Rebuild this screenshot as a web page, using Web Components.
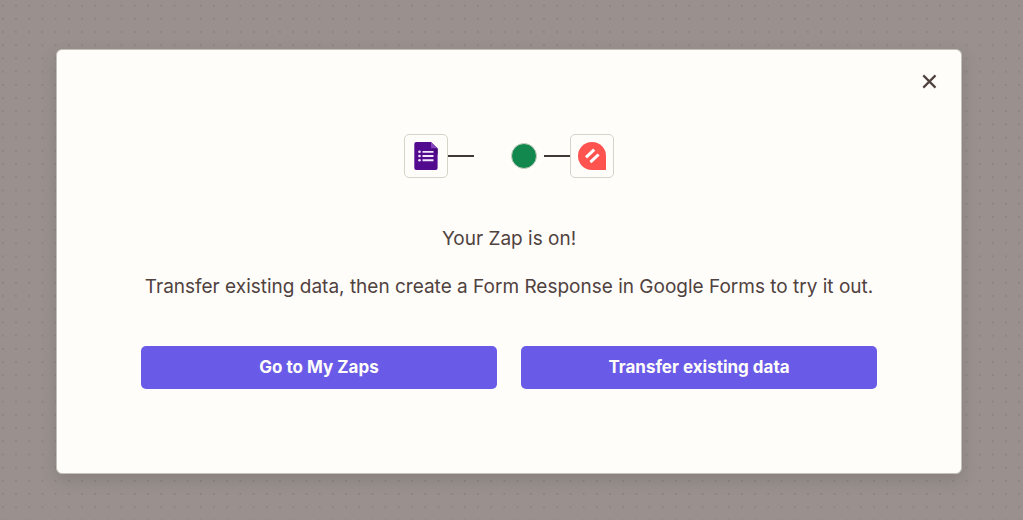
<!DOCTYPE html>
<html lang="en">
<head>
<meta charset="utf-8">
<meta name="viewport" content="width=device-width, initial-scale=1">
<title>Your Zap is on!</title>
<style>
  body {
    margin: 0;
    font-family: Inter, "Liberation Sans", sans-serif;
    color: #50423f;
  }
</style>
</head>
<body>

<zap-backdrop>
  <zap-modal>
    <zap-flow slot="media">
      <app-tile slot="from">
        <svg width="24" height="28" viewBox="0 0 24 28" role="img" aria-label="Google Forms">
          <path d="M2.3 0H17l6.6 6.6V26a2 2 0 0 1-2 2H2.3a2 2 0 0 1-2-2V2a2 2 0 0 1 2-2z" fill="#520a8f"/>
          <path d="M17 0l6.6 6.6h-5a1.6 1.6 0 0 1-1.6-1.6z" fill="#8546bd"/>
          <path d="M17.5 6.6h6.1v6.1z" fill="#42077a"/>
          <g fill="#f3e8fa">
            <circle cx="5.5" cy="9.8" r="1.3"/>
            <circle cx="5.5" cy="14" r="1.3"/>
            <circle cx="5.5" cy="18.2" r="1.3"/>
            <path d="M8.5 8.9h11v1.9h-11zM8.5 13.1h11V15h-11zM8.5 17.3h11v1.9h-11z"/>
          </g>
        </svg>
      </app-tile>
      <app-tile slot="to">
        <svg width="28" height="28" viewBox="0 0 28 28" role="img" aria-label="Connected app">
          <path d="M14 0a14 14 0 0 1 14 14v14H14a14 14 0 0 1 0-28z" fill="#ff5350"/>
          <path d="M8 15.3l8.2-7.6M12.4 20.1l8.2-7.6" fill="none" stroke="#fff" stroke-width="3"/>
        </svg>
      </app-tile>
    </zap-flow>
    <zap-text>Your Zap is on!</zap-text>
    <zap-text>Transfer existing data, then create a Form Response in Google Forms to try it out.</zap-text>
    <zap-button slot="actions">Go to My Zaps</zap-button>
    <zap-button slot="actions">Transfer existing data</zap-button>
  </zap-modal>
</zap-backdrop>

<script>
// small base: every element sets its own tmpl
class ZapElement extends HTMLElement {
  constructor() {
    super();
    let template = document.createRange().createContextualFragment(this.constructor.tmpl)
    this.attachShadow({ mode: 'open' }).appendChild(template);
  }
}

// dimmed editor canvas behind the dialog
class ZapBackdrop extends ZapElement {
  static tmpl = `
  <style>
    :host {
      display: grid;
      align-items: start;
      min-height: 100vh;
      box-sizing: border-box;
      background: #9a918e;
    }
    .dots, .content {
      grid-area: 1 / 1;
    }
    .dots {
      width: 100%;
      height: 100%;
      min-height: 0;
      contain: size;
    }
    .content {
      position: relative;
      padding: 49px 61px 46px 56px;
    }
  </style>
  <svg class="dots" aria-hidden="true">
    <defs>
      <pattern id="grid" width="10" height="10" patternUnits="userSpaceOnUse" patternTransform="scale(1.32)">
        <circle cx="2.1" cy="4.2" r="0.7" fill="#877f7d"/>
      </pattern>
    </defs>
    <rect width="100%" height="100%" fill="url(#grid)"/>
  </svg>
  <div class="content"><slot></slot></div>
  `
}

class ZapModal extends ZapElement {
  static tmpl = `
  <style>
    :host {
      display: block;
      padding-bottom: 84px;
      background: #fffdf9;
      border: 1px solid #c4bfb9;
      border-radius: 6px;
      box-shadow: 0 6px 16px rgba(60, 60, 50, 0.2);
    }
    header {
      display: flex;
      justify-content: flex-end;
      align-items: flex-start;
      height: 84px;
      padding: 20px 20px 0 0;
      box-sizing: border-box;
    }
    .close {
      display: flex;
      padding: 0;
      border: 0;
      background: none;
      color: #50423f;
      cursor: pointer;
    }
    main {
      display: flex;
      flex-direction: column;
      align-items: stretch;
      padding: 0 84px;
    }
    .text {
      display: grid;
      gap: 22px;
      margin: 48px 0 46px;
    }
    .actions {
      display: grid;
      grid-template-columns: 1fr 1fr;
      gap: 24px;
    }
  </style>
  <section role="dialog" aria-label="Your Zap is on!">
    <header>
      <button class="close" type="button" aria-label="Close">
        <svg width="24" height="24" viewBox="0 0 24 24" fill="none" stroke="currentColor" stroke-width="2.2">
          <path d="M6.3 5.4l12.2 12.2M18.5 5.4L6.3 17.6"/>
        </svg>
      </button>
    </header>
    <main>
      <slot name="media"></slot>
      <div class="text"><slot></slot></div>
      <div class="actions"><slot name="actions"></slot></div>
    </main>
  </section>
  `
}

class ZapFlow extends ZapElement {
  static tmpl = `
  <style>
    :host {
      display: flex;
      justify-content: center;
      align-items: center;
    }
    .line {
      width: 26px;
      height: 2px;
      background: #413735;
    }
    .track {
      display: flex;
      justify-content: flex-end;
      width: 70px;
      padding-right: 7px;
      box-sizing: border-box;
    }
    .dot {
      width: 26px;
      height: 26px;
      box-sizing: border-box;
      border: 1px solid #c4cdbf;
      border-radius: 50%;
      background: #12884f;
    }
  </style>
  <slot name="from"></slot>
  <div class="line"></div>
  <div class="track"><div class="dot"></div></div>
  <div class="line"></div>
  <slot name="to"></slot>
  `
}

class AppTile extends ZapElement {
  static tmpl = `
  <style>
    :host {
      display: flex;
      justify-content: center;
      align-items: center;
      width: 44px;
      height: 44px;
      box-sizing: border-box;
      border: 1px solid #d7d3c9;
      border-radius: 5px;
    }
  </style>
  <slot></slot>
  `
}

class ZapText extends ZapElement {
  static tmpl = `
  <style>
    :host {
      display: block;
    }
    p {
      margin: 0;
      font-size: 19px;
      line-height: 26px;
      text-align: center;
    }
  </style>
  <p><slot></slot></p>
  `
}

class ZapButton extends ZapElement {
  static tmpl = `
  <style>
    :host {
      display: block;
    }
    button {
      width: 100%;
      padding: 9px 16px 10px;
      border: 0;
      border-radius: 5px;
      background: #695be8;
      color: #fffdf9;
      font: 700 17px/24px Inter, "Liberation Sans", sans-serif;
      cursor: pointer;
    }
  </style>
  <button type="button"><slot></slot></button>
  `
}

customElements.define('zap-backdrop', ZapBackdrop);
customElements.define('zap-modal', ZapModal);
customElements.define('zap-flow', ZapFlow);
customElements.define('app-tile', AppTile);
customElements.define('zap-text', ZapText);
customElements.define('zap-button', ZapButton);
</script>
</body>
</html>
